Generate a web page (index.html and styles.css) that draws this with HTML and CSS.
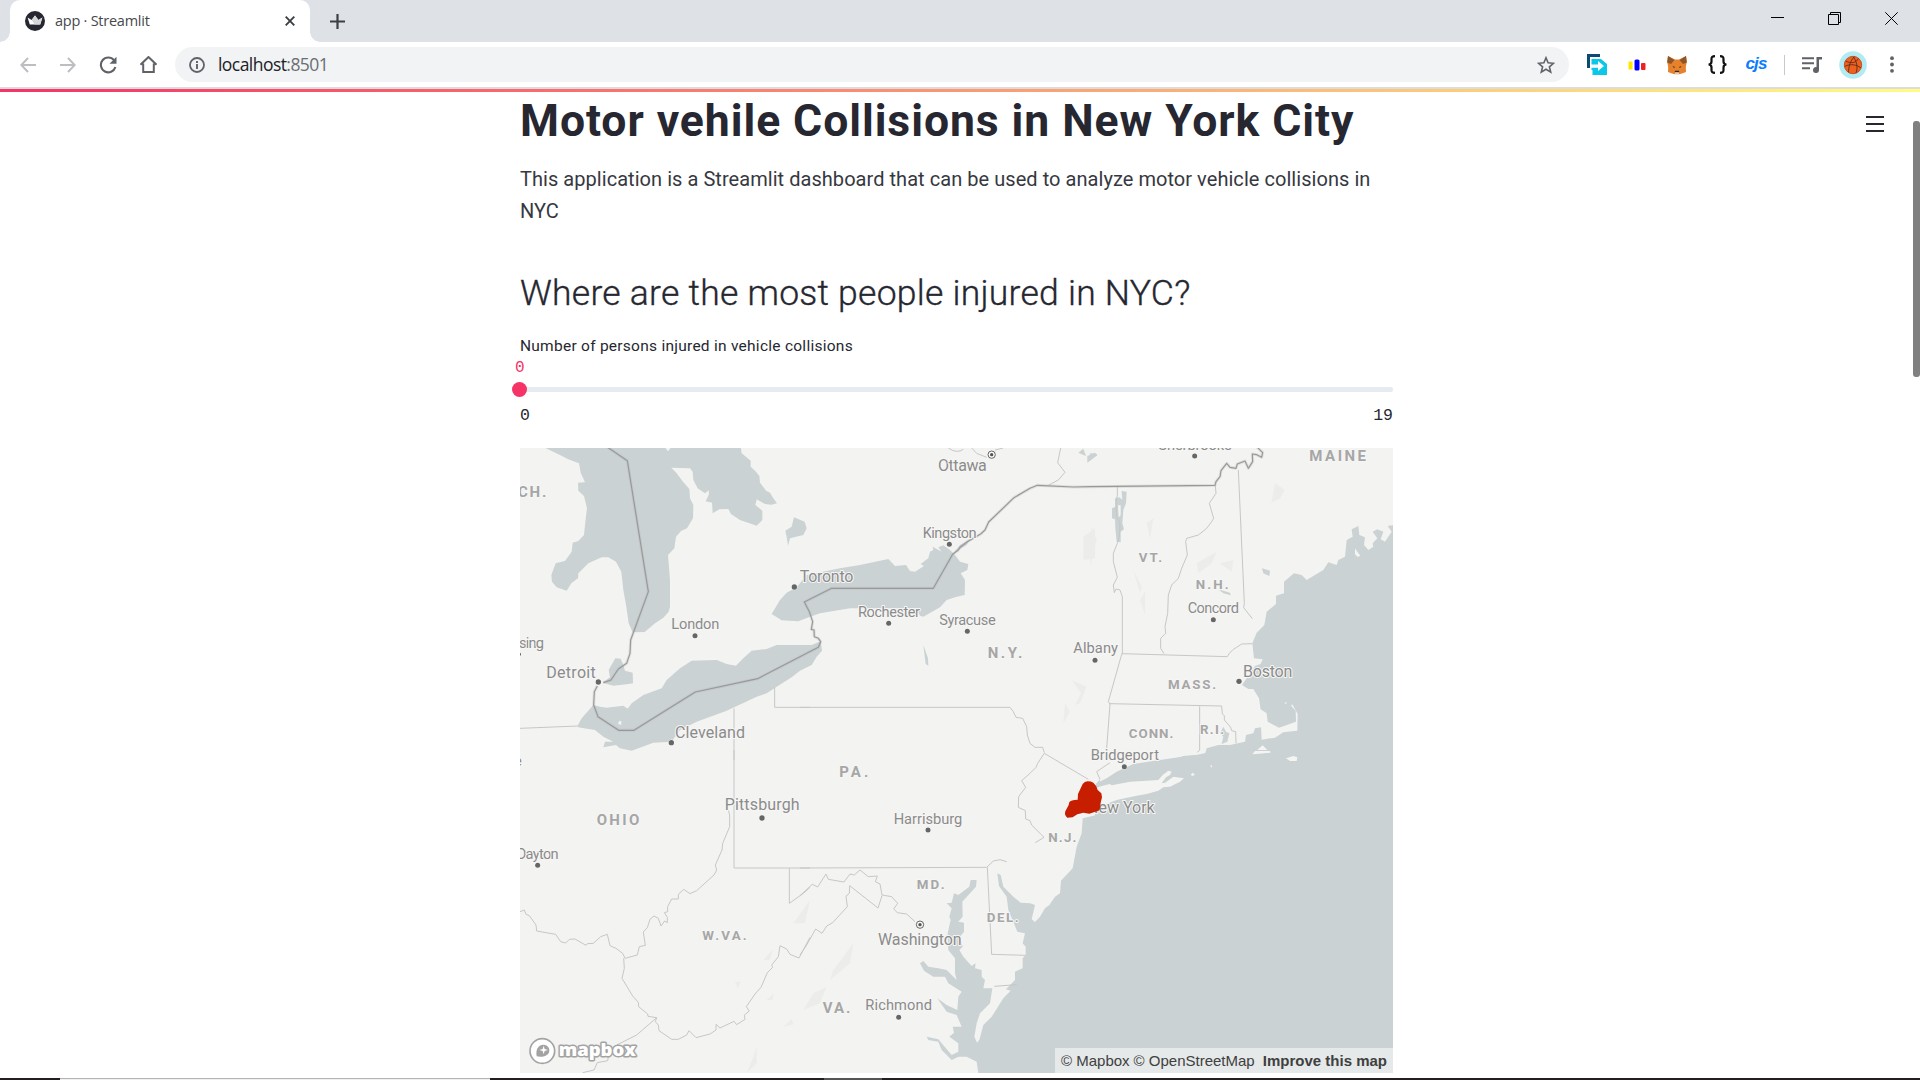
FILE: index.html
```html
<!DOCTYPE html>
<html lang="en">
<head>
<meta charset="utf-8">
<title>app · Streamlit</title>
<link rel="stylesheet" href="styles.css">
</head>
<body>
<div class="window">
  <header class="tabstrip">
    <div class="tab">
      <svg class="favicon" viewBox="0 0 20 20"><circle cx="10" cy="10" r="10" fill="#262730"/><path d="M2.6 6.4 6.6 9 10 4.6 13.4 9l4-2.6-2.2 7.2H4.8z" fill="#fff"/><path d="M10 4.6 13.4 9l4-2.6-2.2 7.2-5.6-.1L6.6 9z" fill="#d5d6d8"/></svg>
      <span class="tab-title">app · Streamlit</span>
      <svg class="tab-close" viewBox="0 0 10 10"><path d="M.7.7l8.6 8.6M9.3.7.7 9.3" stroke="#3c4043" stroke-width="1.9"/></svg>
    </div>
    <svg class="new-tab" viewBox="0 0 15 15"><path d="M7.5 0v15M0 7.5h15" stroke="#3c4043" stroke-width="2.2"/></svg>
    <div class="window-buttons">
      <svg viewBox="0 0 13 13"><path d="M0 5.500h13" stroke="#000"/></svg>
      <svg viewBox="0 0 13 13"><path d="M.5 2.500h10v10H.5zM2.500 2.500v-2h10v10h-2" fill="none" stroke="#000"/></svg>
      <svg viewBox="0 0 13 13"><path d="M.3.3l12.400 12.400M12.700.3.3 12.700" stroke="#000"/></svg>
    </div>
  </header>
  <div class="toolbar">
    <nav class="nav">
      <span class="cell"><svg width="16" height="16" viewBox="0 0 16 16"><path d="M16 8H1.500M8 1 1.300 8 8 15" fill="none" stroke="#bcbec1" stroke-width="2"/></svg></span>
      <span class="cell"><svg width="16" height="16" viewBox="0 0 16 16"><path d="M0 8h14.500M8 1l6.700 7L8 15" fill="none" stroke="#bcbec1" stroke-width="2"/></svg></span>
      <span class="cell"><svg width="18" height="18" viewBox="0 0 18 18"><path d="M15 4.200A7.400 7.400 0 1 0 16.400 11" fill="none" stroke="#5f6368" stroke-width="2.100"/><path d="M17.500.8v6.900h-7z" fill="#5f6368"/></svg></span>
      <span class="cell"><svg width="17" height="17" viewBox="0 0 17 17"><path d="M.5 8.700 8.500 1l8 7.700M3.200 7.500V16h10.600V7.500" fill="none" stroke="#5f6368" stroke-width="2"/></svg></span>
    </nav>
    <div class="omnibox">
      <svg class="info" viewBox="0 0 16 16"><circle cx="8" cy="8" r="7" fill="none" stroke="#5f6368" stroke-width="1.800"/><path d="M8 7v5M8 4v2" stroke="#5f6368" stroke-width="1.900"/></svg>
      <span class="url">localhost<span class="port">:8501</span></span>
      <svg class="star" viewBox="0 0 18 18"><path d="M9 1.800l2.100 5 5.400.5-4.100 3.500 1.300 5.300L9 13.300l-4.700 2.800 1.300-5.300L1.500 7.300l5.400-.5z" fill="none" stroke="#5f6368" stroke-width="1.600"/></svg>
    </div>
    <div class="extensions">
      <span class="cell"><svg width="20" height="21" viewBox="0 0 20 21"><path d="M0 14V0h13v3H3v11z" fill="#0b4a72"/><path d="M4.500 5H14l6 5v11H5.500v-5H4.500z" fill="#0bc8e8"/><path d="M4 10.500h7V7l6 5-6 5v-3.300H4z" fill="#fff"/></svg></span>
      <span class="cell"><svg width="20" height="14" viewBox="0 0 20 14"><path d="M1.500 3.500h4v8h-4z" fill="#ffe500"/><rect x="7.500" y="1.500" width="5" height="11" rx="1.500" fill="#00f"/><rect x="14" y="5" width="4.500" height="7" rx="1" fill="#f02020"/></svg></span>
      <span class="cell"><svg width="20" height="20" viewBox="0 0 20 20"><path d="M1 1l7 3.500h4L19 1l.8 6-1 5 .2 5-4 1.500-3 .8H8L5 18.500 1 17l.2-5-1-5z" fill="#e6812c"/><path d="M1 1l6.500 4-3.500 4L.2 7.500zM19 1l-6.500 4 3.500 4 3.800-1.500z" fill="#8e5528"/><path d="M5.500 11l2.500 1-1 1zM14.500 11l-2.500 1 1 1zM8 15.800h4l.3 1.500H7.700z" fill="#3b2718"/><path d="M8 17.300h4v1.700H8z" fill="#d9cfc7"/></svg></span>
      <span class="cell"><svg width="21" height="19" viewBox="0 0 21 19"><path d="M8 1.200C5 1.200 4.500 2 4.500 4v2.500C4.500 8.500 3.500 9.500 1.500 9.500c2 0 3 1 3 3V15c0 2 .5 2.800 3.500 2.800M13 1.200c3 0 3.500.8 3.500 2.800v2.500c0 2 1 3 3 3-2 0-3 1-3 3V15c0 2-.5 2.800-3.500 2.800" fill="none" stroke="#111" stroke-width="2.200"/></svg></span>
      <span class="cell cjs">cjs</span>
    </div>
    <span class="divider"></span>
    <span class="cell"><svg width="20" height="16" viewBox="0 0 20 16"><path d="M0 1.300h12M0 6.300h12M0 11.300h8" stroke="#5f6368" stroke-width="2"/><path d="M14.500 0H20v2.500h-3V13a3 3 0 1 1-2.500-3z" fill="#5f6368"/></svg></span>
    <span class="cell avatar-cell"><svg width="28" height="28" viewBox="0 0 28 28"><circle cx="14" cy="14" r="13.800" fill="#b2ebf2"/><circle cx="14" cy="14" r="8.700" fill="#f0601f"/><path d="M6.500 10c5 2.500 10 2.500 13-2.500M5.500 15.500c6-3 12-2 16.500 1.500M9.500 21.500c0-6 2-12 6-16M17 22c2-5 1-11-2.500-16" fill="none" stroke="#5a2e1e" stroke-width=".9"/><circle cx="14" cy="14" r="8.700" fill="none" stroke="#b4441a" stroke-width=".8"/></svg></span>
    <span class="cell menu-cell"><svg width="4" height="17" viewBox="0 0 4 17"><g fill="#5f6368"><circle cx="2" cy="2.200" r="1.900"/><circle cx="2" cy="8.500" r="1.900"/><circle cx="2" cy="14.800" r="1.900"/></g></svg></span>
  </div>
  <div class="decoration"></div>
  <div class="page">
    <main class="content">
      <div class="block">
        <h1>Motor vehile Collisions in New York City</h1>
        <p class="intro"><span class="l1">This application is a Streamlit dashboard that can be used to analyze motor vehicle collisions in</span> NYC</p>
        <h2>Where are the most people injured in NYC?</h2>
        <div class="slider">
          <label>Number of persons injured in vehicle collisions</label>
          <div class="track"><span class="value">0</span><span class="thumb"></span></div>
          <div class="ticks"><span>0</span><span>19</span></div>
        </div>
        <div class="map">
          <svg class="map-canvas" viewBox="30 24 2619 1875">
            <defs>
              <path id="border" d="M290 20 352 62 415 455 362 600 360 640 350 670 325 687 303 720 280 728M262 738 253 755 251 795 264 830 326 871H372L556 756 743 716 925 622 932 605 925 595 913 590 912 570 904 568 908 545 898 515 883 486 965 445H1270L1328 343 1345 330 1350 322 1372 305 1412 282 1425 270 1436 246 1512 173 1560 145 1582 136 1690 141 1740 140 2115 136 2118 125 2130 110 2133 92 2150 70 2160 82 2178 85 2182 72 2205 63 2215 85 2228 65 2227 42 2240 44 2255 52 2258 38 2240 20"/>
            </defs>
            <rect x="0" y="0" width="2700" height="1920" fill="#f3f3f1"/>
            <!-- terrain shading -->
            <g class="terrain">
              <path d="M1720 290l35-25v90l-35 5zM1685 720l45 20-20 50-15 5 18-35zM1665 790l15 25-20 35zM1745 260l15 40-20 80zM1910 250l20-15-10 60zM1870 390l25 50-5 20zM1890 480l15-25v70zM2060 370l60-35-15 35-40 30zM2255 205l30-20 10-55 30 20-15 25-50 25-25 20zM2130 370l40-10-5 35z"/>
              <path d="M970 1590l60-80-10 60-60 50zM950 1640l-20 50-50 20 30-50zM730 1850l10-30v50l-30 30zM850 1450l50-70-15 70zM760 1560l28-32-8 32zM675 1625l18 0-10 20zM770 1680l22-20-5 20zM820 1760l25-22 5 15z"/>
            </g>
            <g class="water">
              <path d="M98 20 150 45 175 58 207 70 212 98 225 127 204 128 205 152 222 168 231 205 226 245 222 285 205 303 188 308 185 335 165 363 137 370 124 405 126 425 140 442 170 452 184 430 204 415 205 400 235 370 275 352 295 352 318 365 334 395 340 450 349 500 356 550 368 577 404 576 435 550 460 533 476 515 480 500 480 420 474 345 493 325 498 290 513 273 531 265 549 235 550 195 540 175 538 147 519 125 500 100 484 83 540 85 548 95 550 120 563 145 585 160 596 151 597 163 587 184 606 188 608 220 628 208 655 207 663 222 690 240 740 257 757 240 757 212 736 195 740 178 765 192 785 194 801 190 790 175 780 158 768 152 750 128 748 108 738 95 722 80 722 62 695 40 692 20Z"/>
              <path d="M852 232 884 245 890 265 880 285 858 290 840 295 834 317 830 290 826 272 845 260Z"/>
              <path d="M316 655 332 656 340 675 345 692 368 698 369 730 350 733 310 737 278 728 300 712 296 690Z"/>
              <path d="M204 855 215 835 250 795 270 800 290 803 340 797 353 806 365 790 400 765 455 745 470 720 510 685 545 662 620 660 650 672 678 677 700 655 725 632 770 627 800 615 905 615 932 604 936 632 920 650 905 675 885 685 870 692 845 712 800 740 770 760 740 770 650 812 560 845 510 870 484 905 430 908 365 932 330 925 318 915 280 922 285 905 310 905 280 890 255 870 204 862Z"/>
              <path class="land" d="M328 842l6 2v10l-10-2zM466 24h16l-8 10z"/>
              <g transform="translate(870 0)">
                <path d="M-85 522-60 480-40 458-10 442 20 405 120 385 180 375 265 357 285 378 318 375 330 393 345 395 372 378 362 372 385 355 390 335 400 330 398 320 425 335 415 322 430 316 450 330 465 345 480 365 505 372 502 390 482 400 495 420 494 465 470 470 440 480 420 502 370 530 360 527 350 505 150 505 60 520 30 530-5 544-55 541Z"/>
                <path d="M460 340 480 315 510 298 500 315Z M835 38 850 26 858 48Z M862 48 885 38 892 46 862 68Z M370 615 384 655 385 677 377 672Z"/>
              </g>
              <g transform="translate(1740 0)">
                <path d="M915 255 893 258 905 275 885 305 872 298 880 275 862 268 848 275 862 295 848 310 850 320 835 330 822 315 825 292 808 285 805 258 785 268 788 290 770 300 765 350 745 360 740 375 715 367 700 390 650 420 635 405 612 400 582 425 582 460 558 467 558 492 530 515 523 555 500 578 487 610 492 655 518 658 512 672 495 678 456 735 475 747 490 747 507 775 512 808 530 820 533 845 567 863 618 845 617 812 603 797 607 793 623 822 622 872 580 877 555 893 515 899 513 862 495 865 490 880 468 885 465 905 420 915 385 915 350 925 345 943 280 948 235 962H915Z"/>
                <path d="M95 153 110 155 108 190 100 210 97 250 102 268 92 275 92 307 80 305 76 265 75 238 66 235 66 205 76 200 75 175 88 172 97 180Z M400 860 408 875 418 880 412 905 395 912 400 890 390 880Z M516 385 540 392 538 408 520 400Z M385 448 420 458 422 466 400 460Z M0 40 22 42 0 62Z"/>
                <path class="land" d="M84 196h8v30l-6 6zM795 325l8 12 8 10-8 4-8-8zM487 943 518 916 542 940 500 945ZM583 789l8-3-3 6z"/>
              </g>
              <g transform="translate(870 930)">
                <path d="M848 205 845 250 830 290 818 355 783 392 780 430 765 440 748 465 735 475 720 500 705 516 695 508 705 465 690 460 662 458 640 440 610 410 602 375 592 370 597 408 620 440 625 480 640 515 652 545 675 550 668 580 677 590 677 615 668 625 668 655 645 665 645 690 618 718 632 722 610 745 575 800 550 825 538 870 531 878 523 860 530 820 540 790 570 760 577 715 550 715 555 690 545 680 545 660 525 655 527 640 515 648 490 620 478 600 488 590 480 560 492 545 492 518 475 515 488 500 487 455 510 430 528 410 530 390 512 390 508 410 475 435 462 430 455 458 440 460 455 475 448 500 452 510 443 550 445 600 465 625 465 670 470 690 440 660 415 655 385 650 370 633 360 640 372 662 400 680 435 680 445 700 485 725 475 740 472 780 440 765 412 745 440 785 470 795 485 830 458 830 462 848 448 860 475 880 475 905 455 915 425 880 415 868 380 860 385 870 415 875 425 900 455 930 475 920 500 920 530 935 535 970H1790V120H890V195Z"/>
                <path d="M890 100 900 88V122H885Z"/>
              </g>
              <g transform="translate(1740 930)">
                <path d="M15 115 20 100 50 85 80 65 130 42 245 25 325 14 380 0H920V200H15Z"/>
                <path class="land" d="M0 120 35 108 60 102 65 106 120 95 205 90 218 75 235 62 245 65 240 75 228 82 215 100 225 98 250 80 282 85 270 95 240 110 220 112 205 122 170 132 140 137 80 150 40 165 0 185ZM588 25 610 18 622 22 620 33 600 33ZM487 13 495 3 540 3 542 8ZM302 74l6-6 7 6-8 4zM362 46h4v6h-4z"/>
              </g>
            </g>
            <g class="state-lines">
              <path d="M30 865 204 858M672 805V960M794 742V802H900"/>
              <path transform="translate(870 0)" d="M0 802H630L640 815 648 832 668 835 680 860 682 885 690 910 705 922 728 922 733 938M445 24Q470 42 490 28M515 24 530 40 560 52M585 30 610 24M782 24 773 68 795 97 775 120 745 136"/>
              <path transform="translate(1740 0)" d="M82 137V165L78 190 80 230 90 250 88 290 82 310 70 340 70 365 82 412 70 435 73 458 78 447 90 450 97 470V640L93 650 55 785 60 792 50 925M95 641 412 650 418 640 430 628 440 622 455 612 487 611M376 137 378 160 358 190 368 225 371 235 365 245 350 265 325 285 290 295 287 305 292 345 275 385 265 415 245 435 235 465 233 520 225 560 227 580 212 595V625L222 641M445 90 463 490 461 503 487 536M58 791 395 798 397 822 403 827V840L422 862 425 872 437 875 438 910M329 799V930L322 937"/>
              <path transform="translate(0 930)" d="M672 0V354H900M838 354V460L880 430 900 412M655 180 659 195V230L638 280 636 300 616 345 620 360 612 375 560 422 540 431 521 418 505 433V447H485L473 470V485L463 488 472 502V518L464 513 453 528 445 505 432 498 420 508 412 533 400 546 406 586 388 590 382 615 345 625 338 610 318 595 300 587 292 553 272 560 250 580 232 581 228 586 195 567 178 568 167 579 152 575 137 553 80 543 78 525 58 497 48 493 43 480 30 485M341 625 343 655 336 685 368 738 385 757 386 770 413 792 414 799 440 803 436 815 445 825 447 842 485 868H505L530 855 537 842 558 863 600 852 618 840V823L630 834 672 814 680 824 705 808 703 795 718 783 709 770 735 732 753 712 772 668 788 652 785 645 805 620 810 587 830 597 840 613 867 624 900 562M440 803 380 855 320 885M295 920 293 932 262 938 252 960 218 968"/>
              <path transform="translate(870 930)" d="M0 354 560 352 580 333 600 329 620 335M562 352 575 613 677 616M583 709 650 704M0 437 37 403 53 411 78 372 85 388 132 396 150 372 163 375 180 360 205 380 232 378 226 395 240 402 246 435 275 440 293 460 281 477 292 488 320 492 345 515M246 437 234 474 149 407 148 430 138 438 142 470 98 518 80 528 66 550 47 537 20 585 0 615M733 10 865 88M733 10 713 40 708 52 690 70 665 92 677 112 656 140 655 172 676 182 677 207 690 212 695 225 732 262 706 278"/>
              <path transform="translate(1740 930)" d="M60 38 20 65 30 88"/>
            </g>
            <use href="#border" class="border-glow"/>
            <use href="#border" class="border-line"/>
            <g class="dots">
              <circle cx="555" cy="587" r="7.500"/><circle cx="265" cy="726" r="8"/><circle cx="484" cy="908" r="8"/><circle cx="853" cy="441" r="8"/><circle cx="28" cy="643" r="5"/>
              <circle cx="1318" cy="313" r="7.500"/><circle cx="1136" cy="550" r="7.500"/><circle cx="1372" cy="574" r="7.500"/><circle cx="1755" cy="661" r="7.500"/>
              <circle cx="2054" cy="48" r="7.500"/><circle cx="2110" cy="539" r="7.500"/><circle cx="2187" cy="724" r="8"/><circle cx="1843" cy="980" r="7.500"/>
              <circle cx="756" cy="1134" r="8"/><circle cx="83" cy="1276" r="7.500"/><circle cx="1254" cy="1170" r="7.500"/><circle cx="1166" cy="1732" r="7.500"/>
            </g>
            <g class="capitals">
              <circle cx="1445" cy="44" r="11"/><circle cx="1445" cy="44" r="5" class="core"/>
              <circle cx="1230" cy="1454" r="11"/><circle cx="1230" cy="1454" r="5" class="core"/>
            </g>
            <g class="city">
              <text x="484" y="567" textLength="144">London</text>
              <text class="big" x="109" y="713" textLength="148">Detroit</text>
              <text class="big" x="495" y="895" textLength="210">Cleveland</text>
              <text x="27" y="623" textLength="75">sing</text>
              <text class="big" x="869" y="427" textLength="161">Toronto</text>
              <text class="big" x="1284" y="94" textLength="146">Ottawa</text>
              <text x="1238" y="293" textLength="162">Kingston</text>
              <text x="1044" y="531" textLength="186">Rochester</text>
              <text x="1288" y="556" textLength="169">Syracuse</text>
              <text x="1690" y="640" textLength="134">Albany</text>
              <text x="1945" y="29" textLength="220">Sherbrooke</text>
              <text x="2033" y="520" textLength="154">Concord</text>
              <text class="big" x="2199" y="711" textLength="148">Boston</text>
              <text x="1742" y="961" textLength="205">Bridgeport</text>
              <text class="big" x="1731" y="1120" textLength="203">New York</text>
              <text class="big" x="644" y="1111" textLength="225">Pittsburgh</text>
              <text x="20" y="1257" textLength="126">Dayton</text>
              <text x="12" y="977">e</text>
              <text x="1151" y="1152" textLength="206">Harrisburg</text>
              <text class="big" x="1104" y="1516" textLength="251">Washington</text>
              <text x="1066" y="1711" textLength="200">Richmond</text>
            </g>
            <g class="state">
              <text x="24" y="170" textLength="85">CH.</text>
              <text x="1433" y="654" textLength="104">N.Y.</text>
              <text x="2398" y="64" textLength="170">MAINE</text>
              <text x="1886" y="367" textLength="70" class="small">VT.</text>
              <text x="2057" y="447" textLength="99" class="small">N.H.</text>
              <text x="1974" y="747" textLength="144" class="small">MASS.</text>
              <text x="1856" y="894" textLength="134" class="small">CONN.</text>
              <text x="2070" y="882" textLength="72" class="small">R.I.</text>
              <text x="260" y="1154" textLength="128">OHIO</text>
              <text x="577" y="1500" textLength="133" class="small">W.VA.</text>
              <text x="988" y="1011" textLength="87">PA.</text>
              <text x="1615" y="1206" textLength="84" class="small">N.J.</text>
              <text x="1220" y="1348" textLength="84" class="small">MD.</text>
              <text x="1430" y="1446" textLength="96" class="small">DEL.</text>
              <text x="938" y="1719" textLength="83">VA.</text>
            </g>
            <path transform="translate(870 930)" fill="#c81e00" d="M862 94Q874 94 880 98 890 106 893 120L904 130 906 142 902 158 900 175Q898 184 890 184L868 191 850 188 832 193 818 202 802 203Q792 196 796 184L806 165 808 156Q812 150 833 149L834 132 848 102Q854 94 862 94Z"/>
            <g transform="translate(0 930)" class="logo">
              <circle cx="97" cy="903" r="37" fill="#fff" stroke="#a3a3a3" stroke-width="5"/>
              <path d="M80 919C76 895 88 883 101 884 113 885 119 894 118 902 117 918 98 922 80 919Z" fill="#a3a3a3"/>
              <path d="M101 887 104 897 114 900 104 903 101 913 98 903 88 900 98 897Z" fill="#fff"/>
              <text x="146" y="919" textLength="232" lengthAdjust="spacingAndGlyphs">mapbox</text>
            </g>
          </svg>
          <div class="attribution"><span class="src">© Mapbox</span><span class="src osm">© OpenStreetMap</span><b>Improve this map</b></div>
        </div>
      </div>
      <div class="menu"><i></i><i></i><i></i></div>
    </main>
    <div class="scrollbar"><div class="scroll-thumb"></div></div>
  </div>
  <footer class="taskbar"><span class="search"></span><span class="active"></span></footer>
</div>
</body>
</html>
```
FILE: styles.css
```css
* { box-sizing: border-box; }
body { margin: 0; background: #fff; overflow: hidden; font-family: "Roboto", "Liberation Sans", sans-serif; color: #262730; }
svg { display: block; flex: none; }
.window { width: 1920px; height: 1080px; display: flex; flex-direction: column; }

.tabstrip { height: 42px; flex: none; background: #dee1e6; display: flex; align-items: center; padding-left: 10px; }
.tab { position: relative; width: 300px; height: 42px; background: #fff; border-radius: 10px 10px 0 0; display: flex; align-items: center; padding: 0 15px; }
.tab::before, .tab::after { content: ""; position: absolute; bottom: 0; width: 10px; height: 10px; }
.tab::before { left: -10px; background: radial-gradient(circle at 0 0, #dee1e6 9.500px, #fff 10px); }
.tab::after { right: -10px; background: radial-gradient(circle at 100% 0, #dee1e6 9.500px, #fff 10px); }
.favicon { width: 20px; height: 20px; }
.tab-title { font: 14.500px "Open Sans", "Noto Sans", sans-serif; letter-spacing: -.25px; color: #45494d; margin-left: 10px; padding-bottom: 2px; flex: 1; white-space: nowrap; }
.tab-close { width: 10px; height: 10px; }
.new-tab { width: 15px; height: 15px; margin-left: 20px; }
.window-buttons { margin-left: auto; display: flex; gap: 44px; padding: 0 22px 5px 0; }
.window-buttons svg { width: 13px; height: 13px; }

.toolbar { height: 45px; flex: none; display: flex; align-items: center; padding: 0 10px 0 8px; }
.nav, .extensions { display: flex; }
.cell { width: 40px; height: 45px; display: flex; align-items: center; justify-content: center; flex: none; }
.avatar-cell { width: 42px; }
.menu-cell { width: 36px; }
.omnibox { flex: 1; height: 35px; margin: 0 8px 0 7px; border-radius: 18px; background: #f1f3f4; display: flex; align-items: center; padding: 0 14px; }
.info { width: 16px; height: 16px; }
.url { flex: 1; margin-left: 13px; padding-bottom: 2px; font: 17.500px "Open Sans", "Noto Sans", sans-serif; letter-spacing: -.55px; color: #202124; }
.port { color: #6a6e73; }
.star { width: 18px; height: 18px; }
.cjs { font: italic bold 17px "Liberation Sans", sans-serif; letter-spacing: -.9px; color: #0a7cff; padding: 0 2px 2px 0; }
.divider { width: 1px; height: 20px; background: #c6c9cd; margin: 0 7px; }

.decoration { height: 5px; flex: none; border-top: 2px solid #dadce0; background: linear-gradient(to right, #f63366, #fffd80); background-clip: padding-box; }

.page { flex: 1; min-height: 0; display: flex; }
.content { flex: 1; position: relative; display: flex; justify-content: center; }
.block { width: 873px; padding-top: 2px; }
h1 { margin: 0; height: 54px; font-size: 44.500px; line-height: 54px; font-weight: 700; white-space: nowrap; letter-spacing: .94px; }
.intro { margin: 15px 0 0; font-size: 20px; line-height: 32px; height: 64px; font-weight: 400; letter-spacing: .05px; color: #363841; }
.l1 { white-space: nowrap; }
h2 { margin: 41px 0 0; font-size: 35.500px; line-height: 50px; height: 50px; font-weight: 300; white-space: nowrap; letter-spacing: .25px; -webkit-text-stroke: .35px #262730; }
.slider { margin-top: 16px; }
label { display: block; font-size: 15.500px; line-height: 24px; white-space: nowrap; letter-spacing: .26px; }
.track { position: relative; height: 5px; margin-top: 29px; background: #e6eaf1; border-radius: 2px; }
.value { position: absolute; left: -5px; top: -31px; font: 16px/24px "Liberation Mono", monospace; color: #f63366; }
.thumb { position: absolute; left: -8px; top: -5px; width: 15px; height: 15px; border-radius: 50%; background: #f63366; }
.ticks { display: flex; justify-content: space-between; margin-top: 12px; font: 16.500px/24px "Liberation Mono", monospace; }
.map { position: relative; width: 873px; height: 625px; margin-top: 20px; overflow: hidden; }
.map-canvas { width: 873px; height: 625px; }
.terrain { fill: #ececea; }
.water { fill: #cad2d3; }
.land { fill: #f4f4f2; }
.state-lines { fill: none; stroke: #c6c7c7; stroke-width: 3; }
.border-glow { fill: none; stroke: #b4b4b4; stroke-opacity: .3; stroke-width: 9; stroke-linejoin: round; }
.border-line { fill: none; stroke: #999; stroke-width: 3.500; stroke-linejoin: round; }
.dots { fill: #666; stroke: #fbfbfa; stroke-width: 3; paint-order: stroke; }
.capitals { fill: #f8f8f7; stroke: #666; stroke-width: 3; }
.capitals .core { fill: #555; stroke: none; }
.city, .state { stroke: #f6f6f5; stroke-width: 6; stroke-linejoin: round; paint-order: stroke; font-family: "Roboto", sans-serif; }
.city { fill: #8b8b8b; font-size: 44px; }
.city .big { font-size: 48px; }
.state { fill: #a6a6a6; font-size: 45px; font-weight: 700; }
.state .small { font-size: 40px; }
.logo text { font: 800 54px "Open Sans", sans-serif; fill: #fff; stroke: #a3a3a3; stroke-width: 9; paint-order: stroke; stroke-linejoin: round; }
.attribution { position: absolute; right: 0; bottom: 0; width: 338px; height: 25px; padding: 0 6px; display: flex; align-items: center; background: rgba(255,255,255,.5); font: 15px "Liberation Sans", sans-serif; color: #404040; white-space: nowrap; }
.attribution .osm { margin-left: 4px; }
.attribution b { margin-left: auto; }
.menu { position: absolute; right: 29px; top: 24px; width: 18px; display: flex; flex-direction: column; gap: 5px; }
.menu i { height: 2px; background: #262730; }
.scrollbar { width: 7px; padding-top: 29px; }
.scroll-thumb { height: 256px; background: #808080; border-radius: 3px; }
.taskbar { height: 2px; flex: none; background: #231f20; display: flex; }
.search { width: 430px; margin-left: 60px; background: #f0f0f0; border-top: 1px solid #b4b4b4; }
.active { width: 58px; margin-left: 334px; background: #555; }
```
